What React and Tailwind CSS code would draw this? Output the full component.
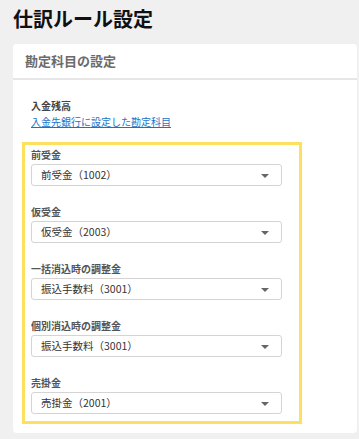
const fields = [
  { label: '前受金', value: '前受金（1002）' },
  { label: '仮受金', value: '仮受金（2003）' },
  { label: '一括消込時の調整金', value: '振込手数料（3001）' },
  { label: '個別消込時の調整金', value: '振込手数料（3001）' },
  { label: '売掛金', value: '売掛金（2001）' },
]

function SelectBox({ value }) {
  return (
    <div className="relative flex h-[22px] w-[251px] items-center rounded-[3px] border border-[#d4d4d4] bg-white pl-[9px] text-[10.5px] text-[#333]">
      <span>{value}</span>
      <span className="absolute right-[12px] top-[9px] h-0 w-0 border-x-[4px] border-t-[4px] border-x-transparent border-t-[#666]"></span>
    </div>
  )
}

export default function App() {
  return (
    <div
      className="min-h-[439px] bg-[#f0f0f0] pl-[13px] pr-[2px] pt-[5px]"
      style={{ fontFamily: '"Noto Sans CJK JP", "Noto Sans", sans-serif' }}
    >
      <h1 className="h-[28px] text-[20px] font-bold leading-[28px] text-[#111]">仕訳ルール設定</h1>

      {/* 設定カード */}
      <div className="mt-[11px] rounded-sm bg-white pb-[9px]">
        <div className="flex h-[36px] items-center border-b-2 border-[#e6e6e6] pl-[12px] text-[13px] font-bold text-[#6b6b6b]">
          勘定科目の設定
        </div>

        <div className="pt-[18px]">
          <div className="pl-[18px]">
            <p className="text-[10px] font-bold leading-[16px] text-[#444]">入金残高</p>
            <a href="#" className="block text-[10px] leading-[16px] text-[#1a73c8] underline">
              入金先銀行に設定した勘定科目
            </a>
          </div>

          <div className="ml-[9px] mt-[12px] w-[280px] border-[3px] border-[#fde05e] pb-[7px] pl-[6px] pt-[2px]">
            <div className="flex flex-col gap-[18px]">
              {fields.map((f) => (
                <div key={f.label}>
                  <p className="h-[17px] text-[10px] font-bold leading-[16px] text-[#555]">{f.label}</p>
                  <SelectBox value={f.value} />
                </div>
              ))}
            </div>
          </div>
        </div>
      </div>
    </div>
  )
}
